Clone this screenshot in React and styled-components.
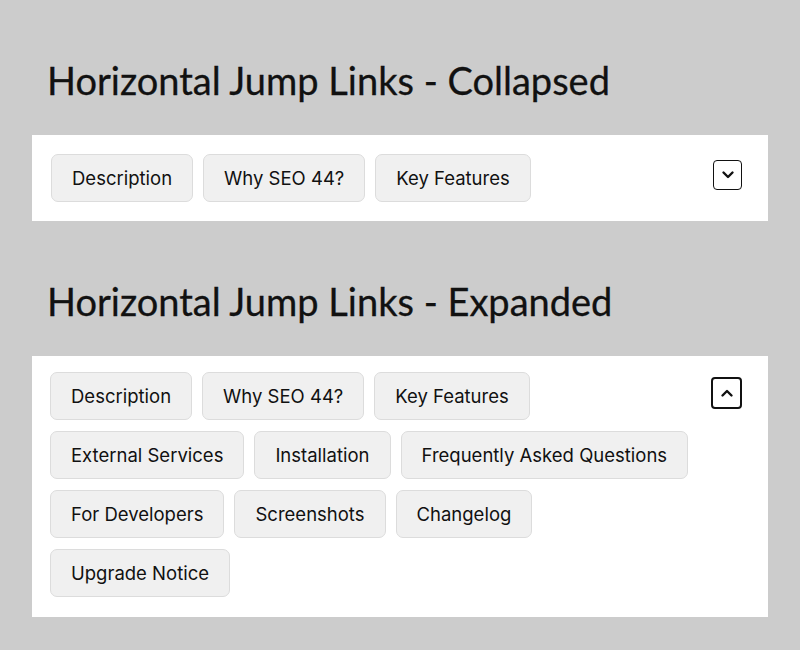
import React from 'react'
import styled, { createGlobalStyle } from 'styled-components'

const GlobalStyle = createGlobalStyle`
    html, body {
        margin: 0;
        padding: 0;
        background: #cccccc;
    }
    body {
        font-family: Inter, "Noto Sans", sans-serif;
    }
`

const Page = styled.main`
    padding: 52px 32px 0;
    display: flex;
    flex-direction: column;
`

const Section = styled.section`
    margin-bottom: 52px;
`

const Heading = styled.h2`
    margin: 0 0 27px 15px;
    font-family: Lato, "Open Sans", sans-serif;
    font-weight: 400;
    font-size: 38px;
    line-height: 56px;
    color: #111;
    -webkit-text-stroke: 0.3px #111;
`

const Panel = styled.nav`
    background: #fff;
    display: flex;
    align-items: flex-start;
    justify-content: space-between;
    padding: ${p => (p.$open ? '16px 26px 20px 18px' : '19px 26px 19px 19px')};
`

const LinkList = styled.ul`
    list-style: none;
    margin: 0;
    padding: 0;
    display: flex;
    flex-wrap: wrap;
    gap: 11px 10px;
`

const JumpLink = styled.a`
    display: flex;
    align-items: center;
    height: 48px;
    box-sizing: border-box;
    padding: 0 20px;
    background: #f0f0f0;
    border: 1px solid #dcdcdc;
    border-radius: 7px;
    font-size: 18.5px;
    color: #111;
    text-decoration: none;
    letter-spacing: 0;
`

const Toggle = styled.button`
    flex: none;
    width: ${p => (p.$open ? '31px' : '29px')};
    height: ${p => (p.$open ? '32px' : '30px')};
    margin-top: ${p => (p.$open ? '5px' : '6px')};
    padding: 0;
    display: flex;
    align-items: center;
    justify-content: center;
    background: #fff;
    border: ${p => (p.$open ? '2.5px' : '1.5px')} solid #111;
    border-radius: 4px;
    cursor: pointer;
`

const collapsed = ['Description', 'Why SEO 44?', 'Key Features']
const all = [
    'Description',
    'Why SEO 44?',
    'Key Features',
    'External Services',
    'Installation',
    'Frequently Asked Questions',
    'For Developers',
    'Screenshots',
    'Changelog',
    'Upgrade Notice',
]

function Chevron({ up }) {
    return (
        <svg width="14" height="14" viewBox="0 0 14 14" fill="none">
            <path
                d={up ? 'M2.5 9.5 L7 5 L11.5 9.5' : 'M2.5 4.5 L7 9 L11.5 4.5'}
                stroke="#111"
                strokeWidth="2.4"
                strokeLinecap="round"
                strokeLinejoin="round"
            />
        </svg>
    )
}

function JumpLinks({ title, items, open }) {
    return (
        <Section>
            <Heading>{title}</Heading>
            <Panel $open={open}>
                <LinkList>
                    {items.map(item => (
                        <li key={item}>
                            <JumpLink href={'#' + item.toLowerCase().replace(/\W+/g, '-')}>{item}</JumpLink>
                        </li>
                    ))}
                </LinkList>
                <Toggle $open={open} aria-label={open ? 'Collapse' : 'Expand'}>
                    <Chevron up={open} />
                </Toggle>
            </Panel>
        </Section>
    )
}

export default function App() {
    return (
        <>
            <GlobalStyle />
            <Page>
                <JumpLinks title="Horizontal Jump Links - Collapsed" items={collapsed} />
                <JumpLinks title="Horizontal Jump Links - Expanded" items={all} open />
            </Page>
        </>
    )
}
